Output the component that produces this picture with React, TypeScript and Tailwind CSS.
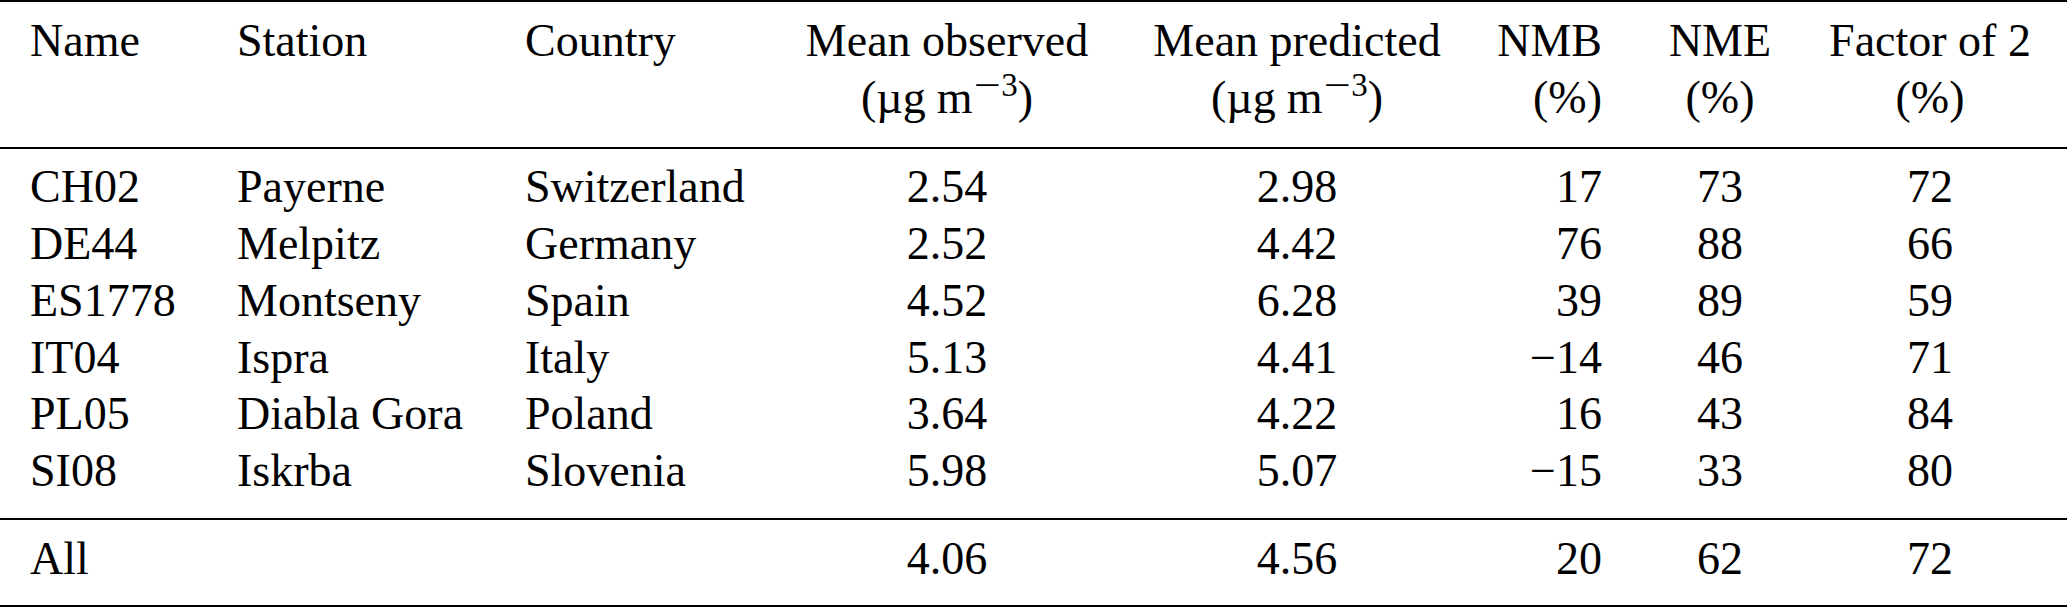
import React from "react";

const grid =
  "grid grid-cols-[237px_288px_247px_350px_350px_130px_236px_184px_1fr] items-start";

const rows: string[][] = [
  ["CH02", "Payerne", "Switzerland", "2.54", "2.98", "17", "73", "72"],
  ["DE44", "Melpitz", "Germany", "2.52", "4.42", "76", "88", "66"],
  ["ES1778", "Montseny", "Spain", "4.52", "6.28", "39", "89", "59"],
  ["IT04", "Ispra", "Italy", "5.13", "4.41", "\u221214", "46", "71"],
  ["PL05", "Diabla Gora", "Poland", "3.64", "4.22", "16", "43", "84"],
  ["SI08", "Iskrba", "Slovenia", "5.98", "5.07", "\u221215", "33", "80"],
];

function Row({ r }: { r: string[] }) {
  return (
    <div className={grid}>
      <div className="pl-[30px] whitespace-nowrap">{r[0]}</div>
      <div className="whitespace-nowrap">{r[1]}</div>
      <div className="whitespace-nowrap">{r[2]}</div>
      <div className="flex justify-center whitespace-nowrap">{r[3]}</div>
      <div className="flex justify-center whitespace-nowrap">{r[4]}</div>
      <div className="flex justify-end whitespace-nowrap">{r[5]}</div>
      <div className="flex justify-center whitespace-nowrap">{r[6]}</div>
      <div className="flex justify-center whitespace-nowrap">{r[7]}</div>
      <div />
    </div>
  );
}

function Unit() {
  return (
    <span className="whitespace-nowrap">
      (µg<span className="inline-block w-[11px]" />m
      <sup className="text-[33px] top-[-0.52em]">
        <span className="inline-block scale-x-[1.45] mx-[5px]">{"\u2212"}</span>3
      </sup>
      )
    </span>
  );
}

export default function App() {
  return (
    <div className="w-[2067px] h-[608px] bg-white text-black font-['Liberation_Serif','Times_New_Roman',serif] text-[46px] leading-[56.7px]">
      {/* header */}
      <div className="border-t-2 border-b-2 border-black pt-[11px] pb-[20.6px]">
        <div className={grid}>
          <div className="pl-[30px] whitespace-nowrap">Name</div>
          <div className="whitespace-nowrap">Station</div>
          <div className="whitespace-nowrap">Country</div>
          <div className="flex flex-col items-center whitespace-nowrap">
            <span>Mean observed</span>
            <Unit />
          </div>
          <div className="flex flex-col items-center whitespace-nowrap">
            <span>Mean predicted</span>
            <Unit />
          </div>
          <div className="flex flex-col items-end whitespace-nowrap">
            <span>NMB</span>
            <span>(%)</span>
          </div>
          <div className="flex flex-col items-center whitespace-nowrap">
            <span>NME</span>
            <span>(%)</span>
          </div>
          <div className="flex flex-col items-center whitespace-nowrap">
            <span>Factor of 2</span>
            <span>(%)</span>
          </div>
          <div />
        </div>
      </div>
      {/* body */}
      <div className="border-b-2 border-black pt-[10.4px] pb-[18.4px]">
        {rows.map((r) => (
          <Row key={r[0]} r={r} />
        ))}
      </div>
      {/* footer */}
      <div className="border-b-2 border-black pt-[11.1px] pb-[17.2px]">
        <Row r={["All", "", "", "4.06", "4.56", "20", "62", "72"]} />
      </div>
    </div>
  );
}
